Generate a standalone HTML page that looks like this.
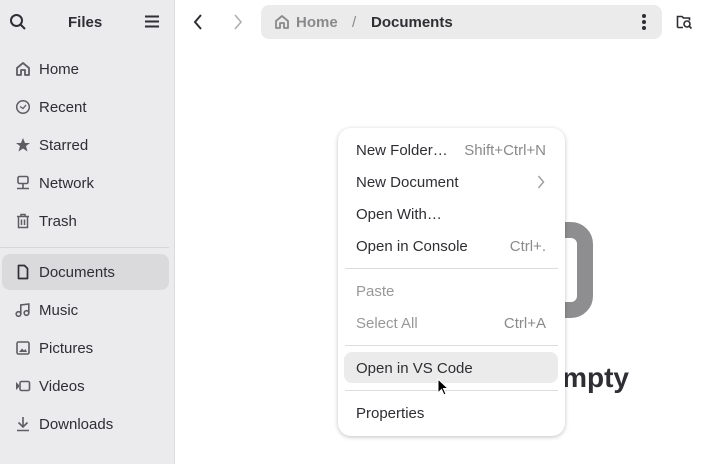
<!DOCTYPE html>
<html><head><meta charset="utf-8"><style>
*{margin:0;padding:0;box-sizing:border-box}
body{width:704px;height:464px;overflow:hidden;background:#fff;font-family:"Liberation Sans",sans-serif;position:relative;color:#2e2e33}
.sb{position:absolute;left:0;top:0;width:175px;height:464px;background:#ebebed;border-right:1px solid #dcdcde}
.ab{position:absolute;font-size:15px}
.it{position:absolute;left:39px;font-size:15px;color:#2e2e33;margin-top:1px}
.ic{position:absolute;left:15px}
.sel{position:absolute;left:2px;top:254px;width:167px;height:36px;background:#dadadc;border-radius:8px}
.path{position:absolute;left:261px;top:5px;width:401px;height:34px;background:#ebebeb;border-radius:8px}
.menu{position:absolute;left:338px;top:128px;width:227px;height:308px;background:#fff;border-radius:13px;box-shadow:0 1px 4px rgba(0,0,0,.25)}
.mi{position:absolute;left:18px;font-size:15px;color:#2e2e33;margin-top:1px}
.sc{position:absolute;right:19px;font-size:15px;color:#8a8a8c;margin-top:1px}
.sep{position:absolute;left:7px;right:7px;height:1px;background:#dcdcdc}
</style></head><body>
<div class="sb">
<svg class="ic" style="left:9px;top:13px" width="18" height="18" viewBox="0 0 18 18"><circle cx="7.5" cy="7.5" r="5.5" fill="none" stroke="#2e2e33" stroke-width="2"/><path d="M11.5 11.5L16 16" stroke="#2e2e33" stroke-width="2"/></svg>
<div class="ab" style="left:68px;top:14px;font-weight:bold">Files</div>
<svg class="ic" style="left:145px;top:15px" width="14" height="13"><path d="M0 1.5H14M0 6.5H14M0 11.5H14" stroke="#2e2e33" stroke-width="2"/></svg>
<svg class="ic" style="top:61px" width="16" height="16" viewBox="0 0 16 16"><path d="M2 14V7L8 2L14 7V14H10V9H6V14Z" fill="none" stroke="#5e5e62" stroke-width="1.8" stroke-linejoin="round"/></svg>
<div class="it" style="top:60px">Home</div>
<svg class="ic" style="top:99px" width="16" height="16"><circle cx="8" cy="8" r="6.3" fill="none" stroke="#5e5e62" stroke-width="1.5"/><path d="M5 7.5L8 9.5L11 6" fill="none" stroke="#5e5e62" stroke-width="1.3"/></svg>
<div class="it" style="top:98px">Recent</div>
<svg class="ic" style="top:137px" width="16" height="16" viewBox="0 0 16 16"><path d="M8 1L10 6H15L11 9L12.5 14.5L8 11.5L3.5 14.5L5 9L1 6H6Z" fill="#5e5e62"/></svg>
<div class="it" style="top:136px">Starred</div>
<svg class="ic" style="top:175px" width="16" height="16"><rect x="3" y="1.5" width="10" height="7" rx="1.5" fill="none" stroke="#5e5e62" stroke-width="1.6"/><path d="M8 9V13M2 13.5H14" stroke="#5e5e62" stroke-width="1.6"/></svg>
<div class="it" style="top:174px">Network</div>
<svg class="ic" style="top:213px" width="16" height="16"><path d="M2 3.5H14M6 3.5V1.5H10V3.5M3.5 4V14.5H12.5V4M6.5 6.5V12M9.5 6.5V12" fill="none" stroke="#5e5e62" stroke-width="1.5"/></svg>
<div class="it" style="top:212px">Trash</div>
<div style="position:absolute;left:0;top:247px;width:169px;height:1px;background:#d6d6d8"></div>
<div class="sel"></div>
<svg class="ic" style="top:264px" width="16" height="16"><path d="M3.5 1.5H9.5L12.5 4.5V14.5H3.5Z" fill="none" stroke="#2e2e33" stroke-width="1.7" stroke-linejoin="round"/></svg>
<div class="it" style="top:263px">Documents</div>
<svg class="ic" style="top:302px" width="16" height="16"><circle cx="3.5" cy="12" r="2.3" fill="none" stroke="#5e5e62" stroke-width="1.6"/><circle cx="11.5" cy="11" r="2.3" fill="none" stroke="#5e5e62" stroke-width="1.6"/><path d="M5.8 12V3L13.8 2V11" fill="none" stroke="#5e5e62" stroke-width="1.6"/></svg>
<div class="it" style="top:301px">Music</div>
<svg class="ic" style="top:340px" width="16" height="16"><rect x="2" y="2" width="12" height="12" rx="1.5" fill="none" stroke="#5e5e62" stroke-width="1.6"/><path d="M4 12L7 8.5L9 10.5L10.5 9L12 12Z" fill="#5e5e62"/></svg>
<div class="it" style="top:339px">Pictures</div>
<svg class="ic" style="top:378px" width="16" height="16"><path d="M1 4V12L4 9V7Z" fill="#5e5e62"/><rect x="5" y="3.5" width="9.5" height="9" rx="1.5" fill="none" stroke="#5e5e62" stroke-width="1.6"/></svg>
<div class="it" style="top:377px">Videos</div>
<svg class="ic" style="top:416px" width="16" height="16"><path d="M8 1V11M3.5 6.5L8 11L12.5 6.5M2 14.5H14" fill="none" stroke="#5e5e62" stroke-width="1.6"/></svg>
<div class="it" style="top:415px">Downloads</div>
</div>

<svg style="position:absolute;left:192px;top:13px" width="12" height="18"><path d="M9 2L3 9L9 16" fill="none" stroke="#2e2e33" stroke-width="2"/></svg>
<svg style="position:absolute;left:232px;top:13px" width="12" height="18"><path d="M3 2L9 9L3 16" fill="none" stroke="#b0b0b2" stroke-width="1.6"/></svg>
<div class="path"></div>
<svg style="position:absolute;left:274px;top:14px" width="16" height="16" viewBox="0 0 16 16"><path d="M2 14V7L8 2L14 7V14H10V9H6V14Z" fill="none" stroke="#8a8a8c" stroke-width="1.8" stroke-linejoin="round"/></svg>
<div class="ab" style="left:296px;top:14px;font-weight:bold;color:#8a8a8c">Home</div>
<div class="ab" style="left:352px;top:14px;color:#8a8a8c">/</div>
<div class="ab" style="left:371px;top:14px;font-weight:bold">Documents</div>
<svg style="position:absolute;left:640px;top:13px" width="8" height="18"><circle cx="4" cy="3" r="2" fill="#2e2e33"/><circle cx="4" cy="9" r="2" fill="#2e2e33"/><circle cx="4" cy="15" r="2" fill="#2e2e33"/></svg>
<svg style="position:absolute;left:676px;top:14px" width="18" height="16"><path d="M1.5 13.5V2.5H6L7.5 4H13.5V6.5M1.5 13.5H7" fill="none" stroke="#2e2e33" stroke-width="1.6"/><circle cx="11" cy="10" r="3" fill="none" stroke="#2e2e33" stroke-width="1.6"/><path d="M13 12L15.5 14.5" stroke="#2e2e33" stroke-width="1.6"/></svg>

<div style="position:absolute;left:430px;top:222px;width:163px;height:96px;border:16px solid #8e8e90;border-radius:22px"></div>
<div style="position:absolute;left:300px;width:329px;text-align:right;top:362px;font-size:28px;font-weight:bold;color:#2e2e33">Folder is Empty</div>

<div class="menu">
<div class="mi" style="top:13px">New Folder…</div><div class="sc" style="top:13px">Shift+Ctrl+N</div>
<div class="mi" style="top:45px">New Document</div>
<svg style="position:absolute;right:20px;top:47px" width="8" height="14"><path d="M1.5 1L6.5 7L1.5 13" fill="none" stroke="#a0a0a2" stroke-width="1.5"/></svg>
<div class="mi" style="top:77px">Open With…</div>
<div class="mi" style="top:109px">Open in Console</div><div class="sc" style="top:109px">Ctrl+.</div>
<div class="sep" style="top:140px"></div>
<div class="mi" style="top:154px;color:#98989a">Paste</div>
<div class="mi" style="top:186px;color:#98989a">Select All</div><div class="sc" style="top:186px">Ctrl+A</div>
<div class="sep" style="top:217px"></div>
<div style="position:absolute;left:6px;right:7px;top:224px;height:31px;background:#ebebeb;border-radius:8px"></div>
<div class="mi" style="top:231px">Open in VS Code</div>
<div class="sep" style="top:262px"></div>
<div class="mi" style="top:276px">Properties</div>
</div>
<svg style="position:absolute;left:437px;top:378px" width="14" height="20"><path d="M1 1V15L4.5 11.5L7 17L9 16L6.5 10.5H11Z" fill="#000" stroke="#fff" stroke-width="1"/></svg>
</body></html>
